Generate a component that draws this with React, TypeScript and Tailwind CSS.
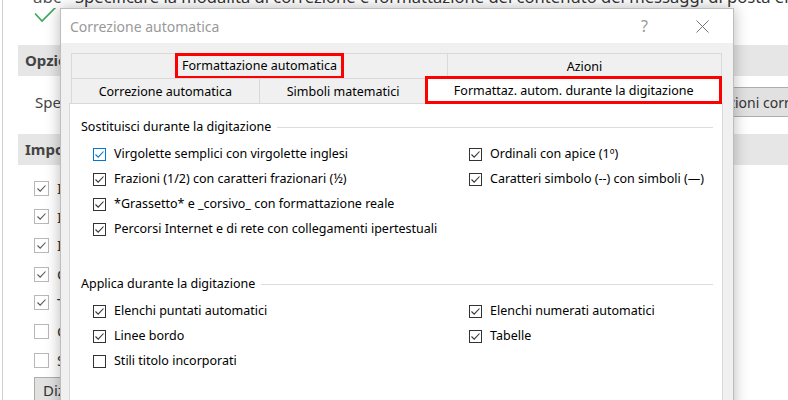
import React from 'react';

const FONT = "font-['Segoe_UI','Noto_Sans',sans-serif]";

function Check({ color = '#333' }: { color?: string }) {
  return (
    <svg width="11" height="11" viewBox="0 0 11 11" className="block">
      <path d="M1.5 5.5 L4.2 8.2 L9.5 2.5" fill="none" stroke={color} strokeWidth="1.1" />
    </svg>
  );
}

function DlgCheckbox({ label, checked, focused }: { label: string; checked: boolean; focused?: boolean }) {
  const color = focused ? '#0078d7' : '#333333';
  return (
    <div className="flex items-center h-[25px]">
      <span
        className={`shrink-0 w-[13px] h-[13px] border bg-white flex items-center justify-center ${
          focused ? 'border-[#0078d7]' : 'border-[#333333]'
        }`}
      >
        {checked && <Check color={color} />}
      </span>
      <span className="ml-[8px] text-[12.5px] text-black whitespace-nowrap">{label}</span>
    </div>
  );
}

function BgCheckbox({ label, checked }: { label: string; checked: boolean }) {
  return (
    <div className="flex items-center h-[28.67px] pl-[31px]">
      <span className="shrink-0 w-[15px] h-[15px] border border-[#b8b8b8] bg-white flex items-center justify-center">
        {checked && <Check color="#555" />}
      </span>
      <span className="ml-[8px] text-[15px] text-[#333] whitespace-nowrap">{label}</span>
    </div>
  );
}

function GroupLabel({ text }: { text: string }) {
  return (
    <div className="flex items-center h-[20px]">
      <span className="text-[12.5px] text-black whitespace-nowrap">{text}</span>
      <span className="flex-1 h-px bg-[#dcdcdc] ml-[6px]" />
    </div>
  );
}

function BackgroundPage() {
  const rows = [
    { label: 'Ignora parole in MAIUSCOLO', checked: true },
    { label: 'Ignora parole che contengono numeri', checked: true },
    { label: 'Ignora indirizzi Internet e di file', checked: true },
    { label: 'Contrassegna parole ripetute', checked: true },
    { label: 'Tratta le maiuscole accentate', checked: true },
    { label: 'Controlla ortografia', checked: false },
    { label: 'Suggerisci solo dal dizionario principale', checked: false },
  ];
  return (
    <div className="ml-[2px] h-[400px] border-l border-[#cfcfcf] overflow-hidden">
      <div className="flex items-start h-[45px]">
        <div className="shrink-0 w-[72px] pl-[30px] flex flex-col -mt-[13px]">
          <span className="text-[17px] leading-[20px] text-[#555]">abc</span>
          <svg width="26" height="16" viewBox="0 0 26 16" className="mt-[1px]">
            <path d="M2 5.5 L9 13 L24 -2" fill="none" stroke="#3aa757" strokeWidth="1.6" />
          </svg>
        </div>
        <p className="-mt-[14px] text-[16.6px] leading-[22px] text-[#333] whitespace-nowrap">
          Specificare la modalità di correzione e formattazione del contenuto dei messaggi di posta elettronica.
        </p>
      </div>
      <div className="ml-[15px] h-[31px] bg-[#e6e6e6] flex items-center pl-[7px]">
        <span className="text-[15px] font-bold text-[#444] whitespace-nowrap">Opzioni di modifica</span>
      </div>
      <div className="mt-[11px] h-[30px] flex items-center">
        <span className="shrink-0 w-[697px] pl-[32px] text-[15px] text-[#444] whitespace-nowrap">
          Specificare le opzioni di correzione automatica:
        </span>
        <span className="shrink-0 h-[30px] px-[8px] flex items-center bg-[#e1e1e1] border border-[#adadad] text-[14px] text-[#333] whitespace-nowrap">
          Opzioni correzione automatica...
        </span>
      </div>
      <div className="mt-[17px] ml-[15px] h-[31px] bg-[#e6e6e6] flex items-center pl-[7px]">
        <span className="text-[15px] font-bold text-[#444] whitespace-nowrap">Impostazioni ortografia</span>
      </div>
      <div className="mt-[9px]">
        {rows.map((r) => (
          <BgCheckbox key={r.label} label={r.label} checked={r.checked} />
        ))}
      </div>
      <div className="mt-[2px] ml-[31px] w-[120px] h-[28px] bg-[#e1e1e1] border border-[#adadad] flex items-center pl-[8px]">
        <span className="text-[15px] text-[#333]">Dizionari...</span>
      </div>
    </div>
  );
}

function Dialog() {
  return (
    <div className="absolute left-[60px] top-[8px] w-[674px] h-[420px] bg-[#f0f0f0] border border-[#bdbdbd] shadow-[0_0_14px_rgba(0,0,0,0.28)] flex flex-col">
      {/* title bar */}
      <div className="h-[34px] bg-white flex items-center pl-[9px]">
        <span className="text-[14px] text-[#999]">Correzione automatica</span>
        <span className="ml-auto mr-[48px] text-[16px] text-[#999]">?</span>
        <svg width="13" height="13" viewBox="0 0 13 13" className="mr-[24px]">
          <path d="M0.5 0.5 L12.5 12.5 M12.5 0.5 L0.5 12.5" stroke="#777" strokeWidth="1" />
        </svg>
      </div>

      {/* tabs */}
      <div className="pt-[10px] pl-[10px]">
        <div className="flex w-[651px] h-[25px] text-[12.5px] text-black">
          <div className="w-[376px] border-t border-l border-[#d9d9d9] flex items-center justify-center">
            <span className="h-[26px] -mt-[1px] px-[4px] pt-[2px] border-[3px] border-[#ff0000] flex items-center">
              Formattazione automatica
            </span>
          </div>
          <div className="w-[275px] pt-[3px] border-t border-x border-[#d9d9d9] flex items-center justify-center">
            Azioni
          </div>
        </div>
        <div className="flex w-[651px] h-[25px] text-[12.5px] text-black">
          <div className="w-[188px] pt-[3px] border-t border-l border-[#d9d9d9] flex items-center justify-center">
            Correzione automatica
          </div>
          <div className="w-[168px] pt-[3px] border-t border-l border-[#d9d9d9] flex items-center justify-center">
            Simboli matematici
          </div>
          <div className="relative z-10 w-[297px] h-[28px] -mt-[2px] -ml-[1px] pt-[2px] bg-white border-[3px] border-[#ff0000] flex items-center justify-center">
            Formattaz. autom. durante la digitazione
          </div>
        </div>
      </div>

      {/* panel */}
      <div className="ml-[8px] w-[654px] flex-1 bg-white border border-[#d9d9d9] pl-[11px] pr-[9px] pt-[13px]">
        <GroupLabel text="Sostituisci durante la digitazione" />
        <div className="mt-[4.5px] grid grid-cols-[376px_1fr] pl-[12px]">
          <div>
            <DlgCheckbox label="Virgolette semplici con virgolette inglesi" checked focused />
            <DlgCheckbox label="Frazioni (1/2) con caratteri frazionari (½)" checked />
            <DlgCheckbox label="*Grassetto* e _corsivo_ con formattazione reale" checked />
            <DlgCheckbox label="Percorsi Internet e di rete con collegamenti ipertestuali" checked />
          </div>
          <div>
            <DlgCheckbox label="Ordinali con apice (1º)" checked />
            <DlgCheckbox label="Caratteri simbolo (--) con simboli (—)" checked />
          </div>
        </div>

        <div className="mt-[32.5px]">
          <GroupLabel text="Applica durante la digitazione" />
        </div>
        <div className="mt-[4.5px] grid grid-cols-[376px_1fr] pl-[12px]">
          <div>
            <DlgCheckbox label="Elenchi puntati automatici" checked />
            <DlgCheckbox label="Linee bordo" checked />
            <DlgCheckbox label="Stili titolo incorporati" checked={false} />
          </div>
          <div>
            <DlgCheckbox label="Elenchi numerati automatici" checked />
            <DlgCheckbox label="Tabelle" checked />
          </div>
        </div>
      </div>
    </div>
  );
}

export default function App() {
  return (
    <div className={`relative w-[788px] h-[400px] overflow-hidden bg-white ${FONT}`}>
      <BackgroundPage />
      <Dialog />
    </div>
  );
}
